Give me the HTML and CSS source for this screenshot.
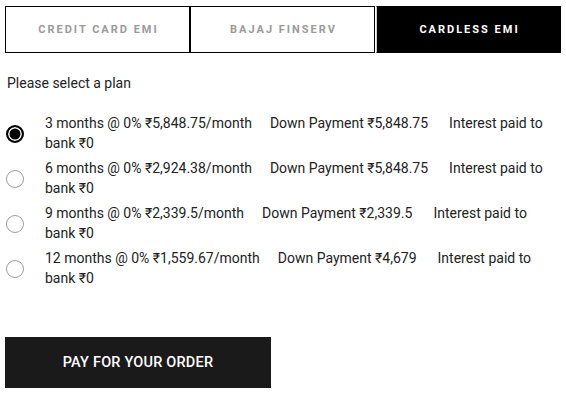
FILE: index.html
```html
<!DOCTYPE html>
<html>
<head>
<meta charset="utf-8">
<link rel="stylesheet" href="styles.css">
</head>
<body>
<div class="page">
  <div class="tabs">
    <div class="tab">CREDIT CARD EMI</div>
    <div class="tab">BAJAJ FINSERV</div>
    <div class="tab active">CARDLESS EMI</div>
  </div>
  <p class="prompt">Please select a plan</p>
  <div class="plans">
    <label class="plan">
      <span class="radio checked"></span>
      <span class="plan-text"><span class="seg a">3 months @ 0% ₹5,848.75/month</span><span class="seg b">Down Payment ₹5,848.75</span><span class="seg">Interest paid to bank ₹0</span></span>
    </label>
    <label class="plan">
      <span class="radio"></span>
      <span class="plan-text"><span class="seg a">6 months @ 0% ₹2,924.38/month</span><span class="seg b">Down Payment ₹5,848.75</span><span class="seg">Interest paid to bank ₹0</span></span>
    </label>
    <label class="plan">
      <span class="radio"></span>
      <span class="plan-text"><span class="seg a">9 months @ 0% ₹2,339.5/month</span><span class="seg b">Down Payment ₹2,339.5</span><span class="seg">Interest paid to bank ₹0</span></span>
    </label>
    <label class="plan">
      <span class="radio"></span>
      <span class="plan-text"><span class="seg a">12 months @ 0% ₹1,559.67/month</span><span class="seg b">Down Payment ₹4,679</span><span class="seg">Interest paid to bank ₹0</span></span>
    </label>
  </div>
  <button class="pay">PAY FOR YOUR ORDER</button>
</div>
</body>
</html>
```
FILE: styles.css
```css
* { box-sizing: border-box; }
html, body { margin: 0; padding: 0; background: #fff; }
body { font-family: Roboto, "Noto Sans", sans-serif; color: #222; }
.page { padding: 6px 5px 0 5px; width: 566px; }
.tabs { display: flex; width: 556px; height: 47px; }
.tab {
  flex: 1;
  border: 1px solid #000;
  display: flex; align-items: center; justify-content: center;
  font-size: 11px; font-weight: 700; letter-spacing: 2px;
  color: #9a9a9a;
  padding-left: 2px;
}
.tab.active {
  background: #000; color: #fff;
  border-left: 1px solid #ccc;
  margin-left: 1px;
  box-shadow: -1px 0 0 #fff;
}
.prompt { margin: 21px 0 0 2px; font-size: 14px; line-height: 18px; color: #222; }
.plans { margin-top: 22px; display: flex; flex-direction: column; gap: 6px; }
.plan { display: flex; align-items: center; }
.radio {
  flex: none; width: 18px; height: 18px; border-radius: 50%;
  border: 1px solid #9c9c9c; margin: 0 21px 0 1px;
  background: #fff;
}
.radio.checked { border: 2px solid #000; box-shadow: inset 0 0 0 1.5px #fff; background: #000; }
.plan-text { display: block; width: 505px; font-size: 14px; line-height: 19.5px; color: #222; }
.seg.a { margin-right: 18px; }
.seg.b { margin-right: 21px; }
.pay {
  display: block; margin-top: 49px; width: 266px; height: 51px;
  background: #1a1a1a; color: #fff; border: none;
  font-family: Roboto, sans-serif; font-size: 14.5px; font-weight: 500;
  letter-spacing: 0.2px;
}
```
